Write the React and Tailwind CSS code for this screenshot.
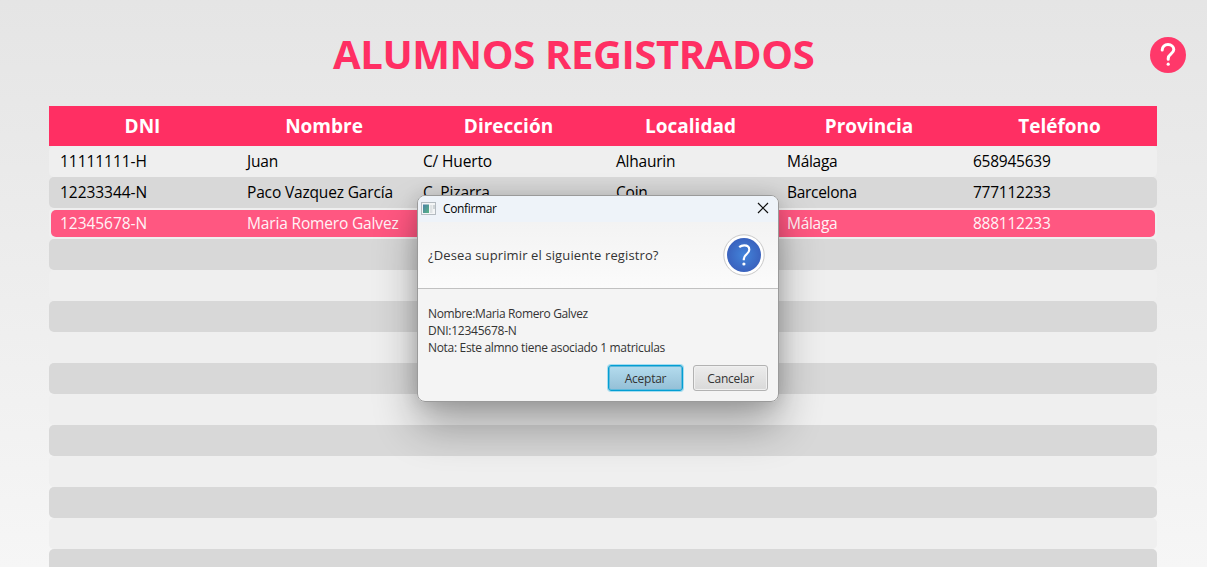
import React from "react";

const columns = ["DNI", "Nombre", "Dirección", "Localidad", "Provincia", "Teléfono"];

const tracking = [
  "tracking-[-0.05px]",
  "tracking-[-0.16px]",
  "tracking-[-0.15px]",
  "tracking-[-0.23px]",
  "tracking-[-0.3px]",
  "tracking-[-0.25px]",
];

const students = [
  ["11111111-H", "Juan", "C/ Huerto", "Alhaurin", "Málaga", "658945639"],
  ["12233344-N", "Paco Vazquez García", "C  Pizarra", "Coin", "Barcelona", "777112233"],
  ["12345678-N", "Maria Romero Galvez", "", "", "Málaga", "888112233"],
];

const rows = Array.from({ length: 14 }, (_, i) => students[i] || null);
const grid = "grid grid-cols-[187px_176px_193px_171px_186px_195px]";

function Row({ cells, index }) {
  const selected = index === 2;
  const tone = index % 2 ? "bg-[#d8d8d8]" : "bg-[#efefef]";
  return (
    <div className={`h-[31px] shrink-0 rounded-[5px] ${tone} ${selected ? "p-0.5" : ""}`}>
      <div className={selected ? "h-[27px] rounded-[5px] bg-[#ff5781] text-[#fff3f6]" : "h-full text-black"}>
        {cells && (
          <div
            className={`${grid} text-[15.5px] ${
              selected ? "-ml-0.5 w-[1108px] leading-[27px]" : "leading-[31px]"
            }`}
          >
            {cells.map((c, i) => (
              <span key={i} className={`pl-[11px] whitespace-pre ${tracking[i]}`}>
                {c}
              </span>
            ))}
          </div>
        )}
      </div>
    </div>
  );
}

function WindowIcon() {
  return (
    <svg width="16" height="14" viewBox="0 0 16 14" className="shrink-0">
      <defs>
        <linearGradient id="pane" x1="0" y1="0" x2="1" y2="1">
          <stop offset="0" stopColor="#4a7fa6" />
          <stop offset="1" stopColor="#58b585" />
        </linearGradient>
      </defs>
      <rect x="0.5" y="0.5" width="14" height="12" fill="#f4f6f7" stroke="#b4bbc1" />
      <rect x="2" y="2.5" width="6" height="8.5" fill="url(#pane)" />
      <rect x="9" y="3" width="2.5" height="8" fill="#dfe3e5" />
      <rect x="12" y="3" width="2" height="4" fill="#cfd5d8" />
    </svg>
  );
}

function Dialog() {
  return (
    <div className="absolute top-[195px] left-[417px] flex h-[207px] w-[362px] flex-col overflow-hidden rounded-lg border border-[#9a9a9a] bg-[#f4f4f4] text-[#333333]">
      <div className="flex h-[26px] shrink-0 items-center bg-[#eef3f9] pr-[9px] pl-[3px]">
        <WindowIcon />
        <span className="ml-1.5 text-[12px] leading-[26px] tracking-[-0.35px] text-black">Confirmar</span>
        <svg width="12" height="12" viewBox="0 0 12 12" className="-mt-0.5 ml-auto" stroke="#111" strokeWidth="1.2">
          <path d="M1 1L11 11M11 1L1 11" />
        </svg>
      </div>
      <div className="flex h-[67px] shrink-0 items-center justify-between border-b border-[#c1c1c1] bg-linear-to-b from-[#f3f3f3] to-[#fbfbfb] pr-[13px] pl-2.5">
        <span className="pt-0.5 text-[13px] tracking-[0.12px]">¿Desea suprimir el siguiente registro?</span>
        <svg width="42" height="42" viewBox="0 0 42 42">
          <defs>
            <radialGradient id="blue">
              <stop offset="0" stopColor="#4284da" />
              <stop offset="1" stopColor="#3a62be" />
            </radialGradient>
          </defs>
          <circle cx="21" cy="21" r="20.2" fill="#fff" stroke="#c8c8c8" />
          <circle cx="21" cy="21" r="17" fill="url(#blue)" />
          <path
            d="M16.2 13.2C17.6 12 19.2 11.4 21.2 11.4C24.4 11.4 26.3 13.1 26.3 15.8C26.3 20.2 20.8 20.4 20.8 25V26.2"
            fill="none"
            stroke="#fff"
            strokeWidth="2.2"
          />
          <circle cx="20.9" cy="30" r="1.6" fill="#fff" />
        </svg>
      </div>
      <div className="flex flex-col pt-4 pl-2.5 text-[12px] leading-[17px]">
        <span className="tracking-[-0.36px]">Nombre:Maria Romero Galvez</span>
        <span className="tracking-[-0.25px]">DNI:12345678-N</span>
        <span className="tracking-[-0.32px]">Nota: Este almno tiene asociado 1 matriculas</span>
      </div>
      <div className="mt-[9px] flex justify-end gap-2.5 pr-2.5 text-[12px] tracking-[-0.25px]">
        <button className="h-[26px] w-[75px] rounded-[3px] border border-[#039ed3] bg-linear-to-b from-[#b4dcee] to-[#94bfd6] leading-[25px] shadow-[0_0_0_1px_#a5dcef,inset_0_0_0_1px_#5fb9db]">
          Aceptar
        </button>
        <button className="h-[26px] w-[75px] rounded-[3px] border border-[#b2b2b2] bg-linear-to-b from-[#ececec] to-[#d9d9d9] leading-[25px] shadow-[inset_0_0_0_1px_#f0f0f0]">
          Cancelar
        </button>
      </div>
    </div>
  );
}

export default function App() {
  return (
    <main className="relative h-[567px] w-[1207px] overflow-hidden bg-linear-to-b from-[#e5e5e5] to-[#f6f6f6] font-['Open_Sans','Noto_Sans',sans-serif]">
      <header className="flex h-[106px] items-start pt-8 pr-[21px] pl-[333px]">
        <h1 className="text-[40px] leading-[44px] font-bold tracking-[-0.38px] whitespace-nowrap text-[#ff2f63]">
          ALUMNOS REGISTRADOS
        </h1>
        <svg width="36" height="36" viewBox="0 0 36 36" className="mt-[5px] ml-auto">
          <circle cx="18" cy="18" r="18" fill="#ff386a" />
          <path
            d="M12.2 12.9C12.2 9.6 14.6 7.6 18 7.6C21.4 7.6 23.8 9.7 23.8 12.6C23.8 16.8 18.2 17 18.2 21.4V22.2"
            fill="none"
            stroke="#fff"
            strokeWidth="3"
            strokeLinecap="round"
          />
          <circle cx="18.2" cy="27.2" r="1.6" fill="#fff" />
        </svg>
      </header>
      <section className="mx-[49px] flex w-[1108px] flex-col">
        <div className={`${grid} h-10 shrink-0 bg-[#ff2f63] text-center text-[19px] leading-[41px] font-bold text-white`}>
          {columns.map((label) => (
            <span key={label}>{label}</span>
          ))}
        </div>
        {rows.map((cells, i) => (
          <Row key={i} cells={cells} index={i} />
        ))}
      </section>
      <div className="absolute top-[195px] left-[417px] h-[207px] w-[362px] rounded-lg shadow-[0_24px_44px_rgba(0,0,0,0.32),0_0_18px_rgba(0,0,0,0.14)]" />
      <Dialog />
    </main>
  );
}
